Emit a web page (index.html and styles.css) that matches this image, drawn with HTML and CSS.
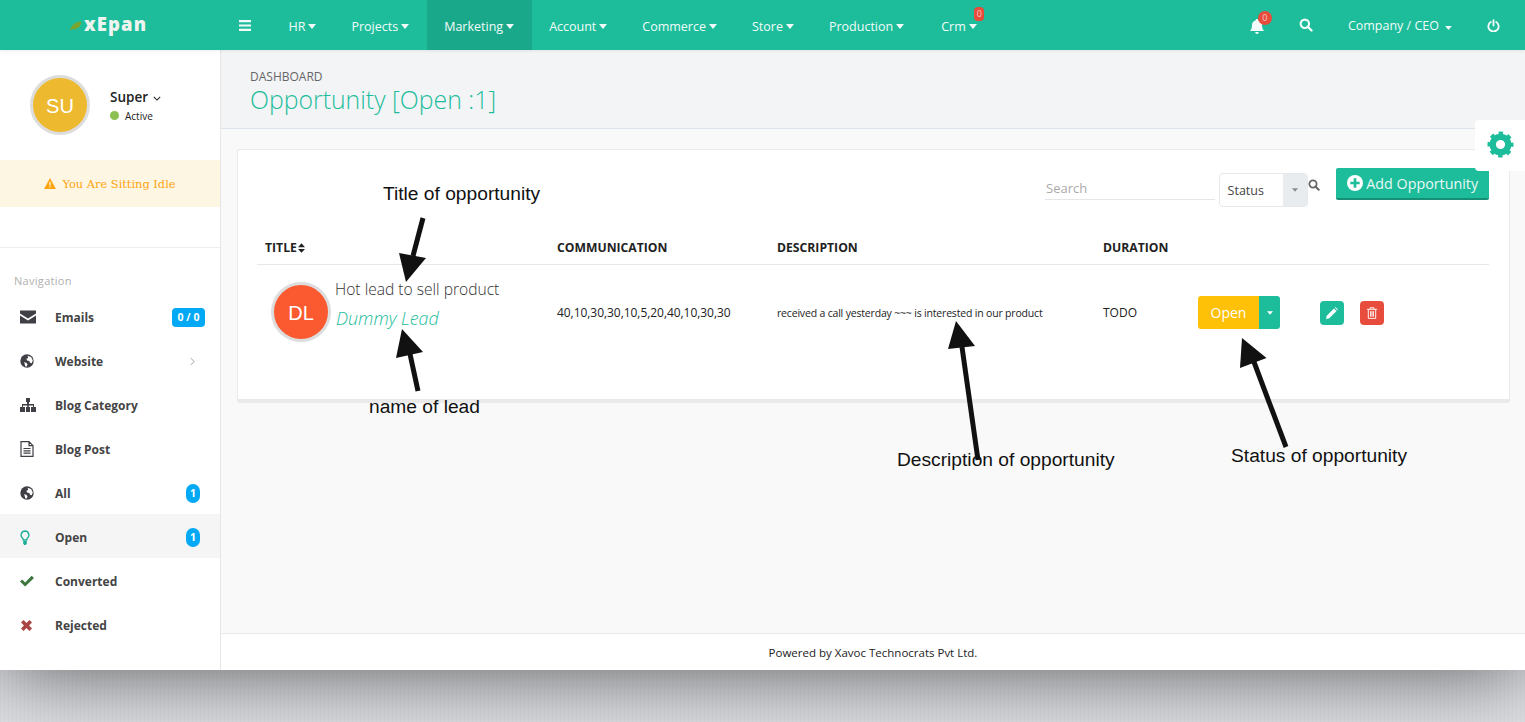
FILE: index.html
```html
<!DOCTYPE html>
<html>
<head>
    <title>Opportunity</title>
    <link rel="stylesheet" href="styles.css">
</head>
<body>
    <svg class="icon-defs" width="0" height="0">
        <symbol id="i-search" viewBox="0 0 24 24"><circle cx="10" cy="10" r="7.2" fill="none" stroke="currentColor" stroke-width="3.6"/><path d="M15 15l6.5 6.5" stroke="currentColor" stroke-width="4" stroke-linecap="round"/></symbol>
        <symbol id="i-globe" viewBox="0 0 24 24"><circle cx="12" cy="12" r="11.5" fill="currentColor"/><path d="M13 3l6 2 3 6-2 5-3-1-1-3-4-1-1-3 3-1zM7 14l4 1 2 3-2 4-2-1-1-4z" fill="#fff"/></symbol>
        <symbol id="i-caret" viewBox="0 0 10 6"><path d="M0 0h10L5 6z" fill="currentColor"/></symbol>
    </svg>
    <div class="shell">
        <header class="topbar">
            <a class="brand">
                <svg class="leaf" viewBox="0 0 14 11"><path d="M0 11C1 5 6 1 13 0c0 6-4 10-10 9z" fill="#7aa52f"/></svg>
                xEpan
            </a>
            <nav class="mainmenu">
                <a class="burger"><svg viewBox="0 0 12 11"><path d="M0 0h12v2.2H0zM0 4.4h12v2.2H0zM0 8.800h12V11H0z" fill="currentColor"/></svg></a>
                <a>HR<svg class="caret"><use href="#i-caret"/></svg></a>
                <a>Projects<svg class="caret"><use href="#i-caret"/></svg></a>
                <a class="active">Marketing<svg class="caret"><use href="#i-caret"/></svg></a>
                <a>Account<svg class="caret"><use href="#i-caret"/></svg></a>
                <a>Commerce<svg class="caret"><use href="#i-caret"/></svg></a>
                <a>Store<svg class="caret"><use href="#i-caret"/></svg></a>
                <a>Production<svg class="caret"><use href="#i-caret"/></svg></a>
                <a class="has-badge">Crm<svg class="caret"><use href="#i-caret"/></svg><span class="crm-badge">0</span></a>
            </nav>
            <div class="usermenu">
                <a class="bell">
                    <svg viewBox="0 0 14 15"><path d="M7 0c.8 0 1.200.5 1.200 1.200C10.500 1.800 12 3.600 12 6c0 3.500 1 4.800 2 6H0c1-1.200 2-2.500 2-6 0-2.400 1.500-4.200 3.800-4.800C5.800.5 6.200 0 7 0zM5.200 13h3.600c0 1-.8 2-1.800 2s-1.800-1-1.800-2z" fill="currentColor"/></svg>
                    <span class="bell-badge">0</span>
                </a>
                <a class="top-search"><svg><use href="#i-search"/></svg></a>
                <a class="company">Company / CEO<svg class="caret small"><use href="#i-caret"/></svg></a>
                <a class="power"><svg viewBox="0 0 24 24"><path d="M7 5.500a9.500 9.500 0 1 0 10 0" fill="none" stroke="currentColor" stroke-width="3.400" stroke-linecap="round"/><path d="M12 2v10" stroke="currentColor" stroke-width="3.400" stroke-linecap="round"/></svg></a>
            </div>
        </header>

        <div class="body-row">
            <aside class="sidebar">
                <div class="profile">
                    <div class="avatar su">SU</div>
                    <div class="profile-text">
                        <div class="profile-name">Super
                            <svg class="chev" viewBox="0 0 10 6"><path d="M1 1l4 4 4-4" fill="none" stroke="currentColor" stroke-width="1.300"/></svg>
                        </div>
                        <div class="profile-status"><i class="dot"></i>Active</div>
                    </div>
                </div>
                <div class="idle">
                    <svg viewBox="0 0 13 12"><path d="M6.500 0l6.500 12H0z" fill="currentColor"/><path d="M5.800 4h1.400v4.200H5.800zM5.800 9h1.400v1.400H5.800z" fill="#fdf6e3"/></svg>
                    You Are Sitting Idle
                </div>
                <div class="nav-title">Navigation</div>
                <ul class="sidenav">
                    <li>
                        <svg class="nav-icon" viewBox="0 0 16 13"><path d="M0 0h16v3L8 8 0 3zM0 5l8 5 8-5v8H0z" fill="currentColor"/></svg>
                        Emails<span class="pill">0 / 0</span>
                    </li>
                    <li>
                        <svg class="nav-icon globe"><use href="#i-globe"/></svg>
                        Website
                        <svg class="more" viewBox="0 0 6 10"><path d="M1 1l4 4-4 4" fill="none" stroke="currentColor" stroke-width="1.100"/></svg>
                    </li>
                    <li>
                        <svg class="nav-icon" viewBox="0 0 16 14"><path d="M6 0h4v4H9v2h5v3h2v5h-5V9h2V7.500H8.800V9H10v5H6V9h1.200V7.500H3V9h2v5H0V9h2V6h5V4H6z" fill="currentColor"/></svg>
                        Blog Category
                    </li>
                    <li>
                        <svg class="nav-icon file" viewBox="0 0 14 16"><path d="M1 .7h8l4 4v10.600H1zM9 .7v4h4M3.500 7.500h7M3.500 9.800h7M3.500 12.100h7" fill="none" stroke="currentColor" stroke-width="1.200"/></svg>
                        Blog Post
                    </li>
                    <li>
                        <svg class="nav-icon globe"><use href="#i-globe"/></svg>
                        All<span class="count">1</span>
                    </li>
                    <li class="current">
                        <svg class="nav-icon bulb" viewBox="0 0 10 15"><path d="M5 1a4 4 0 0 1 2.500 7c-.6.6-.8 1.200-.8 2H3.300c0-.8-.2-1.400-.8-2A4 4 0 0 1 5 1z" fill="none" stroke="currentColor" stroke-width="1.400"/><path d="M3.200 11h3.600v2.500L5.800 15H4.200l-1-1.500z" fill="currentColor"/></svg>
                        Open<span class="count">1</span>
                    </li>
                    <li>
                        <svg class="nav-icon check" viewBox="0 0 15 12"><path d="M0 6.500L2.300 4.300 5.500 7.500 12.500.5 15 2.800 5.500 12z" fill="currentColor"/></svg>
                        Converted
                    </li>
                    <li>
                        <svg class="nav-icon cross" viewBox="0 0 12 12"><path d="M2.800 0L6 3.200 9.200 0 12 2.800 8.800 6 12 9.200 9.200 12 6 8.800 2.800 12 0 9.200 3.200 6 0 2.800z" fill="currentColor"/></svg>
                        Rejected
                    </li>
                </ul>
            </aside>

            <main class="main">
                <div class="titlebar">
                    <div class="crumb">DASHBOARD</div>
                    <h1>Opportunity [Open :1]</h1>
                </div>
                <div class="content">
                    <section class="card">
                        <div class="toolbar">
                            <div class="search-field">Search</div>
                            <div class="status-select">
                                <span class="status-label">Status</span>
                                <span class="status-arrow"><svg class="caret tiny"><use href="#i-caret"/></svg></span>
                            </div>
                            <svg class="search-btn"><use href="#i-search"/></svg>
                            <a class="add-btn">
                                <svg viewBox="0 0 24 24"><circle cx="12" cy="12" r="12" fill="#fff"/><path d="M10 5h4v5h5v4h-5v5h-4v-5H5v-4h5z" fill="#1dbd9b"/></svg>
                                Add Opportunity
                            </a>
                        </div>
                        <table class="grid">
                            <colgroup>
                                <col class="c-title"><col class="c-comm"><col class="c-desc"><col class="c-dur"><col class="c-status"><col>
                            </colgroup>
                            <thead>
                                <tr>
                                    <th>Title<svg class="sort" viewBox="0 0 8 11"><path d="M4 0l4 4.500H0zM0 6.500h8L4 11z" fill="currentColor"/></svg></th>
                                    <th>Communication</th>
                                    <th>Description</th>
                                    <th>Duration</th>
                                    <th></th>
                                    <th></th>
                                </tr>
                            </thead>
                            <tbody>
                                <tr>
                                    <td>
                                        <div class="lead">
                                            <div class="avatar dl">DL</div>
                                            <div class="lead-text">
                                                <div class="opp-title">Hot lead to sell product</div>
                                                <div class="opp-lead">Dummy Lead</div>
                                            </div>
                                        </div>
                                    </td>
                                    <td class="comm">40,10,30,30,10,5,20,40,10,30,30</td>
                                    <td class="desc">received a call yesterday ~~~ is interested in our product</td>
                                    <td class="dur">TODO</td>
                                    <td>
                                        <div class="split">
                                            <span class="split-main">Open</span>
                                            <span class="split-arrow"><svg class="caret tiny"><use href="#i-caret"/></svg></span>
                                        </div>
                                    </td>
                                    <td>
                                        <div class="actions">
                                            <a class="act edit"><svg viewBox="0 0 12 12"><path d="M0 12l.7-3.300L8 1.400 10.600 4 3.300 11.300zM8.800.6l.6-.6 2.600 2.600-.6.600z" fill="currentColor"/></svg></a>
                                            <a class="act del"><svg viewBox="0 0 12 13"><path d="M.5 2.500h11M4 2.500V.8h4v1.700M2 2.500V12.300h8V2.500M4.500 4.500v6M6 4.500v6M7.500 4.500v6" fill="none" stroke="currentColor" stroke-width="1"/></svg></a>
                                        </div>
                                    </td>
                                </tr>
                            </tbody>
                        </table>
                    </section>
                </div>
                <footer class="footer">Powered by Xavoc Technocrats Pvt Ltd.</footer>
            </main>
        </div>
    </div>

    <a class="settings-tab">
        <svg viewBox="0 0 28 28"><circle cx="14" cy="14" r="8" fill="none" stroke="currentColor" stroke-width="6.500"/><circle cx="14" cy="14" r="11.500" fill="none" stroke="currentColor" stroke-width="4" stroke-dasharray="4.500 4.530" stroke-dashoffset="2.250"/></svg>
    </a>

    <!-- Notes and arrows drawn over the screenshot -->
    <svg class="arrows" viewBox="0 0 1525 722">
        <path d="M423 218L413 256" class="shaft"/>
        <path d="M406 282L399 253 426 258z"/>
        <path d="M418 391L410 354" class="shaft"/>
        <path d="M402 329L396 358 423 352z"/>
        <path d="M978 460L962 347" class="shaft"/>
        <path d="M956 321L948 349 975 346z"/>
        <path d="M1286 447L1254 362" class="shaft"/>
        <path d="M1242 338L1240 368 1266.500 358z"/>
    </svg>
    <div class="note note-title">Title of opportunity</div>
    <div class="note note-lead">name of lead</div>
    <div class="note note-desc">Description of opportunity</div>
    <div class="note note-status">Status of opportunity</div>
</body>
</html>
```

FILE: styles.css
```css
html, body {
    margin: 0;
    padding: 0;
    height: 722px;
    overflow: hidden;
}
body {
    position: relative;
    background-color: #dfe0e4;
    /* Faint linen weave behind the page */
    background-image:
        repeating-linear-gradient(90deg, rgba(0, 0, 0, 0.015) 0 1px, transparent 1px 4px),
        repeating-linear-gradient(0deg, rgba(255, 255, 255, 0.04) 0 1px, transparent 1px 3px);
    font-family: "Open Sans", sans-serif;
    font-size: 12px;
    color: #333;
}
.icon-defs {
    position: absolute;
}
a {
    color: inherit;
}
.shell {
    height: 670px;
    display: flex;
    flex-direction: column;
    box-shadow: 0 0 80px rgba(0, 0, 0, 0.62);
}

/* Top bar */
.topbar {
    height: 50px;
    flex: none;
    display: flex;
    align-items: stretch;
    background-color: #1dbd9b;
    color: #f2fbf9;
    box-shadow: 0 1px 3px rgba(0, 0, 0, 0.08);
    position: relative;
}
.brand {
    width: 221px;
    flex: none;
    display: flex;
    align-items: center;
    box-sizing: border-box;
    padding: 0 0 4px 70px;
    font-size: 18.500px;
    font-weight: 800;
    letter-spacing: 1.1px;
    color: #eef4ef;
}
.leaf {
    width: 12px;
    height: 10px;
    margin: 6px 2px 0 0;
}
.mainmenu {
    display: flex;
    align-items: stretch;
    font-size: 12.500px;
}
.mainmenu a {
    display: flex;
    align-items: center;
    padding: 2px 17.500px 0;
    position: relative;
}
.mainmenu .burger {
    padding: 0 20px 0 18px;
}
.burger svg {
    width: 12px;
    height: 11px;
}
.mainmenu .active {
    background-color: #19a98a;
}
.mainmenu .has-badge {
    margin-left: 2px;
}
.caret {
    width: 8px;
    height: 5px;
    margin-left: 3px;
}
.caret.small {
    width: 7px;
    height: 4px;
    margin-left: 6px;
}
.caret.tiny {
    width: 6px;
    height: 4px;
    margin: 0;
}
.crm-badge {
    position: absolute;
    top: 7px;
    right: 10px;
    width: 10px;
    height: 14px;
    line-height: 14px;
    border-radius: 4px;
    background-color: #e74c3c;
    color: #f8c9c2;
    font-size: 9px;
    text-align: center;
}
.usermenu {
    margin-left: auto;
    display: flex;
    align-items: center;
}
.bell {
    position: relative;
    width: 14px;
    height: 15px;
    margin-right: 35px;
    margin-top: 2px;
}
.bell svg {
    display: block;
    width: 14px;
    height: 15px;
}
.bell-badge {
    position: absolute;
    top: -8px;
    left: 8px;
    width: 14px;
    height: 14px;
    line-height: 14px;
    border-radius: 50%;
    background-color: #e74c3c;
    color: #f8c9c2;
    font-size: 9px;
    text-align: center;
}
.top-search svg {
    display: block;
    width: 14px;
    height: 14px;
}
.company {
    margin-left: 35px;
    font-size: 12.500px;
}
.power {
    margin: 0 25px 0 35px;
}
.power svg {
    display: block;
    width: 13px;
    height: 13px;
}

/* Sidebar */
.body-row {
    flex: 1;
    display: flex;
    min-height: 0;
}
.sidebar {
    width: 220px;
    flex: none;
    background-color: #fff;
    border-right: 1px solid #e6e6e6;
}
.profile {
    height: 110px;
    display: flex;
    align-items: center;
    box-sizing: border-box;
    padding-left: 30px;
    gap: 20px;
}
.avatar {
    width: 60px;
    height: 60px;
    flex: none;
    box-sizing: border-box;
    border: 3px solid #ddd;
    border-radius: 50%;
    display: flex;
    align-items: center;
    justify-content: center;
    color: #fff;
    font-family: "Liberation Sans", sans-serif;
    font-size: 20px;
    padding-top: 3px;
}
.avatar.su {
    background-color: #edb92e;
}
.avatar.dl {
    background-color: #fb5a30;
}
.profile-name {
    font-size: 13.500px;
    font-weight: 600;
    color: #222;
    line-height: 18px;
}
.chev {
    width: 8px;
    height: 5px;
    margin-left: 1px;
    vertical-align: 1px;
}
.profile-status {
    display: flex;
    align-items: center;
    font-size: 10px;
    color: #222;
    margin-top: 3px;
}
.dot {
    width: 9px;
    height: 9px;
    border-radius: 50%;
    background-color: #8cc152;
    margin-right: 6px;
}
.idle {
    height: 47px;
    display: flex;
    align-items: center;
    justify-content: center;
    gap: 6px;
    background-color: #fdf6e3;
    color: #ffa411;
    font-family: "DejaVu Serif", serif;
    font-size: 11.400px;
}
.idle svg {
    width: 12px;
    height: 11px;
}
.nav-title {
    margin-top: 40px;
    border-top: 1px solid #eee;
    padding: 25px 0 0 14px;
    line-height: 15px;
    font-size: 11px;
    color: #b0b0b0;
    letter-spacing: 0.3px;
}
.sidenav {
    list-style: none;
    margin: 6px 0 0;
    padding: 0;
}
.sidenav li {
    height: 44px;
    box-sizing: border-box;
    display: flex;
    align-items: center;
    padding: 2px 20px 0;
    font-size: 12px;
    font-weight: 700;
    color: #444;
}
.sidenav .current {
    background-color: #f5f5f5;
}
.nav-icon {
    width: 16px;
    height: 14px;
    margin-right: 19px;
    color: #3f3f46;
}
.nav-icon.globe {
    width: 14px;
    margin-right: 21px;
}
.nav-icon.file {
    width: 14px;
    height: 16px;
    margin-right: 21px;
}
.nav-icon.bulb {
    width: 10px;
    height: 15px;
    margin-right: 25px;
    color: #1dae98;
}
.nav-icon.check {
    width: 14px;
    height: 12px;
    margin-right: 21px;
    color: #3c763d;
}
.nav-icon.cross {
    width: 11px;
    height: 11px;
    margin: 0 23px 0 1px;
    color: #a94442;
}
.pill {
    margin-left: auto;
    margin-right: -5px;
    width: 33px;
    height: 19px;
    line-height: 19px;
    border-radius: 4px;
    background-color: #03a9f4;
    color: #fff;
    font-size: 10.500px;
    text-align: center;
}
.more {
    margin-left: auto;
    margin-right: 5px;
    width: 5px;
    height: 9px;
    color: #999;
}
.count {
    margin-left: auto;
    width: 14px;
    height: 19px;
    line-height: 19px;
    border-radius: 7px;
    background-color: #03a9f4;
    color: #fff;
    font-size: 10.500px;
    text-align: center;
}

/* Main column */
.main {
    flex: 1;
    min-width: 0;
    display: flex;
    flex-direction: column;
    background-color: #f9f9f9;
}
.titlebar {
    height: 79px;
    flex: none;
    box-sizing: border-box;
    padding: 19px 0 0 29px;
    background-color: #f3f4f6;
    border-bottom: 1px solid #dfe5ec;
}
.crumb {
    font-size: 12px;
    line-height: 16px;
    color: #666;
}
h1 {
    margin: 0;
    font-size: 24.800px;
    line-height: 28px;
    font-weight: 300;
    color: #1dbd9b;
}
.content {
    flex: 1;
    padding: 20px 15px 0 16px;
}
.card {
    height: 254px;
    box-sizing: border-box;
    padding: 18px 20px 0 19px;
    background-color: #fff;
    border: 1px solid #eaeaea;
    border-bottom-width: 4px;
    border-radius: 3px;
}
.toolbar {
    display: flex;
    align-items: flex-start;
    padding-left: 788px;
    height: 56px;
}
.search-field {
    width: 170px;
    height: 32px;
    box-sizing: border-box;
    padding: 11px 0 0 1px;
    border-bottom: 1px solid #e4e6e8;
    font-size: 13px;
    line-height: 18px;
    color: #aaa;
}
.status-select {
    display: flex;
    width: 90px;
    height: 34px;
    margin: 5px 0 0 4px;
    box-sizing: border-box;
    border: 1px solid #e6e8ea;
    border-radius: 4px;
    overflow: hidden;
    font-size: 12.500px;
    color: #444;
}
.status-label {
    flex: 1;
    line-height: 33px;
    padding-left: 8px;
}
.status-arrow {
    width: 24px;
    display: flex;
    align-items: center;
    justify-content: center;
    background-color: #e9ecef;
    color: #888;
}
.search-btn {
    width: 12px;
    height: 12px;
    margin-top: 11px;
    color: #666;
}
.add-btn {
    margin-left: 16px;
    width: 153px;
    height: 32px;
    box-sizing: border-box;
    display: flex;
    align-items: center;
    justify-content: center;
    gap: 3px;
    border-radius: 2px;
    border-bottom: 2px solid #178f76;
    background-color: #1dbd9b;
    color: #e8f8f5;
    font-size: 14.300px;
}
.add-btn svg {
    width: 16px;
    height: 16px;
}

/* Opportunity table */
.grid {
    width: 1232px;
    table-layout: fixed;
    border-collapse: collapse;
}
.c-title {
    width: 292px;
}
.c-comm {
    width: 220px;
}
.c-desc {
    width: 326px;
}
.c-dur {
    width: 95px;
}
.c-status {
    width: 122px;
}
.grid th {
    height: 40px;
    box-sizing: border-box;
    padding: 8px 8px 0;
    text-align: left;
    text-transform: uppercase;
    font-size: 12.200px;
    font-weight: 700;
    color: #222;
    border-bottom: 1px solid #e8e8e8;
}
.sort {
    width: 7px;
    height: 10px;
    margin-left: 1px;
    vertical-align: -1px;
}
.grid td {
    padding: 0 8px;
    height: 96px;
    font-size: 12px;
    color: #222;
}
.lead {
    display: flex;
    align-items: flex-start;
    margin: -2px 0 0 6px;
    gap: 4px;
}
.lead-text {
    margin-top: -3px;
}
.opp-title {
    font-size: 15.600px;
    line-height: 20px;
    font-weight: 300;
    color: #333;
}
.opp-lead {
    margin: 9px 0 0 1px;
    font-size: 17.900px;
    line-height: 20px;
    font-weight: 300;
    font-style: italic;
    color: #1dbd9b;
}
.comm {
    letter-spacing: -0.05px;
}
.desc {
    font-size: 10.500px !important;
    letter-spacing: -0.18px;
}
.split {
    display: flex;
    width: 82px;
    height: 33px;
    border-radius: 3px;
    overflow: hidden;
    color: #fff;
}
.split-main {
    width: 61px;
    line-height: 33px;
    text-align: center;
    background-color: #ffc107;
    font-size: 14px;
}
.split-arrow {
    flex: 1;
    display: flex;
    align-items: center;
    justify-content: center;
    background-color: #1dbd9b;
}
.actions {
    display: flex;
    gap: 16px;
}
.act {
    width: 24px;
    height: 24px;
    border-radius: 4px;
    display: flex;
    align-items: center;
    justify-content: center;
    color: #fff;
}
.act svg {
    width: 12px;
    height: 12px;
}
.edit {
    background-color: #1dbd9b;
}
.del {
    background-color: #e74c3c;
}
.footer {
    height: 37px;
    flex: none;
    box-sizing: border-box;
    border-top: 1px solid #e8e8e8;
    background-color: #fff;
    line-height: 37px;
    text-align: center;
    font-size: 11.500px;
    color: #222;
}

/* Things lying over the page */
.settings-tab {
    position: absolute;
    top: 120px;
    right: 0;
    width: 50px;
    height: 51px;
    display: flex;
    align-items: center;
    justify-content: center;
    background-color: #fff;
    border-radius: 4px 0 0 4px;
    color: #1dbd9b;
}
.settings-tab svg {
    width: 27px;
    height: 27px;
    margin-bottom: 2px;
}
.arrows {
    position: absolute;
    top: 0;
    left: 0;
    width: 1525px;
    height: 722px;
    pointer-events: none;
    fill: #111;
}
.shaft {
    fill: none;
    stroke: #111;
    stroke-width: 5px;
}
.note {
    position: absolute;
    font-family: "Liberation Sans", sans-serif;
    font-size: 19.200px;
    line-height: 22px;
    color: #111;
    white-space: nowrap;
}
.note-title {
    top: 183px;
    left: 383px;
}
.note-lead {
    top: 396px;
    left: 369px;
}
.note-desc {
    top: 449px;
    left: 897px;
}
.note-status {
    top: 445px;
    left: 1231px;
}
```
